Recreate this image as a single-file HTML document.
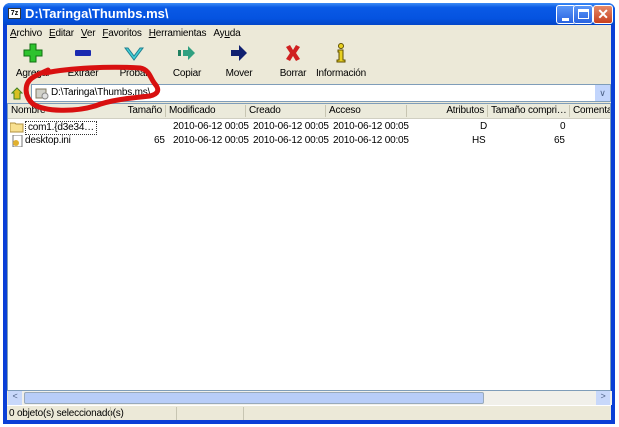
<!DOCTYPE html>
<html><head><meta charset="utf-8"><style>
*{margin:0;padding:0;box-sizing:border-box}
body{width:619px;height:427px;background:#fff;position:relative;overflow:hidden;font-family:"Liberation Sans",sans-serif;font-size:10px;letter-spacing:-0.2px;color:#000}
.win{position:absolute;left:3px;top:3px;width:612px;height:421px;background:#0a3fd6;border-radius:7px 7px 0 0}
.title{position:absolute;left:0;top:0;width:612px;height:22px;border-radius:7px 7px 0 0;background:linear-gradient(#3d8cf5,#0a5ae6 20%,#0553e0 70%,#0346c8);color:#fff;font-weight:bold;font-size:13px;letter-spacing:0;line-height:22px;padding-left:22px}
.ic7{position:absolute;left:5px;top:5px;width:13px;height:11px;background:#fff;border:1px solid #333;font-size:7px;line-height:9px;color:#000;text-align:center}
.btn{position:absolute;top:2px;width:20px;height:19px;border:1px solid #fff;border-radius:3px;background:linear-gradient(#5a96f7,#2a63e0)}
.btn.x{background:linear-gradient(#e48a6a,#c8401e)}
.inner{position:absolute;left:4px;top:22px;width:604px;height:395px;background:#ece9d8}
.menu{position:absolute;top:2px;left:3px;height:14px;line-height:14px}
.menu span{margin-right:7px}
.tb{position:absolute;top:17px;left:0;width:604px;height:42px}
.tbi{position:absolute;top:0;width:56px;text-align:center}
.tbi .lb{position:absolute;top:26px;left:0;width:56px;text-align:center}
.addr{position:absolute;left:24px;top:59px;width:580px;height:18px;background:#fff;border:1px solid #7f9db9}
.dd{position:absolute;right:0;top:0;width:15px;height:16px;background:#c2d5fc;color:#4d6185;font-size:9px;text-align:center;line-height:16px}
.list{position:absolute;left:0;top:78px;width:604px;height:288px;background:#fff;border:1px solid #7f9db9}
.hdr{position:absolute;left:0;top:0;width:602px;height:15px;background:#ebeadb;border-bottom:1px solid #d0cfc2}
.hdr span{position:absolute;top:1px;border-right:1px solid #c7c5b2;height:12px;line-height:12px;padding:0 3px;white-space:nowrap;overflow:hidden}
.row{position:absolute;left:0;height:14px;line-height:14px;width:602px}
.row span{position:absolute;white-space:nowrap}
.sb{position:absolute;left:0;top:287px;width:604px;height:14px;background:#f1f0ea}
.status{position:absolute;left:0;top:380px;width:604px;height:15px;background:#ece9d8;border-top:1px solid #fff;line-height:15px}
</style></head><body>
<div class="win">
 <div class="title"><div class="ic7">7z</div>D:\Taringa\Thumbs.ms\</div>
 <div class="btn" style="left:553px"><div style="position:absolute;left:5px;top:12px;width:7px;height:3px;background:#fff"></div></div>
 <div class="btn" style="left:570px"><div style="position:absolute;left:4px;top:3px;width:11px;height:10px;border:1px solid #fff;border-top-width:3px"></div></div>
 <div class="btn x" style="left:590px;color:#fff;font-weight:bold;font-size:14px;text-align:center;line-height:17px">✕</div>
 <div class="inner">
  <div class="menu"><span><u>A</u>rchivo</span><span><u>E</u>ditar</span><span><u>V</u>er</span><span><u>F</u>avoritos</span><span><u>H</u>erramientas</span><span>Ay<u>u</u>da</span></div>
  <div class="tb">
   <div class="tbi" style="left:-2px"><svg width="20" height="22" viewBox="0 0 20 22"><path d="M7 2h6v6h6v6h-6v6H7v-6H1V8h6z" fill="#2ec32e" stroke="#107010"/></svg><div class="lb">Agregar</div></div>
   <div class="tbi" style="left:48px"><svg width="20" height="22" viewBox="0 0 20 22"><rect x="2" y="8" width="16" height="6" rx="1" fill="#1a2ab0"/></svg><div class="lb">Extraer</div></div>
   <div class="tbi" style="left:99px"><svg width="20" height="22" viewBox="0 0 20 22"><path d="M1 6l9 12 9-12-3 0-6 8-6-8z" fill="#40d0d8" stroke="#208090"/></svg><div class="lb">Probar</div></div>
   <div class="tbi" style="left:152px"><svg width="20" height="22" viewBox="0 0 20 22"><rect x="1" y="8" width="3" height="6" fill="#208060"/><path d="M6 8h5V4l7 7-7 7v-4H6z" fill="#30a080"/></svg><div class="lb">Copiar</div></div>
   <div class="tbi" style="left:204px"><svg width="20" height="22" viewBox="0 0 20 22"><path d="M2 8h8V3l8 8-8 8v-5H2z" fill="#102070"/></svg><div class="lb">Mover</div></div>
   <div class="tbi" style="left:258px"><svg width="20" height="22" viewBox="0 0 20 22"><path d="M3 5l4-2 3 5 3-5 4 2-4 6 4 6-4 2-3-5-3 5-4-2 4-6z" fill="#d02020"/></svg><div class="lb">Borrar</div></div>
   <div class="tbi" style="left:306px;width:56px"><svg width="20" height="22" viewBox="0 0 20 22"><circle cx="10" cy="4" r="2.5" fill="#e8d020" stroke="#605000"/><path d="M7 8h5v10h2v2H6v-2h2v-8H7z" fill="#e8d020" stroke="#605000"/></svg><div class="lb">Información</div></div>
  </div>
  <svg style="position:absolute;left:4px;top:61px" width="14" height="14"><path d="M3 13V7H1l5-5 5 5H9v6z" fill="#d8c020" stroke="#408020"/></svg>
  <div class="addr"><svg style="position:absolute;left:3px;top:1px" width="14" height="14"><rect x="1" y="3" width="10" height="9" fill="#d0d0c8" stroke="#807860"/><circle cx="10" cy="10" r="3" fill="#e0e0e0" stroke="#888"/></svg><span style="position:absolute;left:19px;top:2px">D:\Taringa\Thumbs.ms\</span><div class="dd">∨</div></div>
  <div class="list">
   <div class="hdr">
    <span style="left:0;width:158px">Nombre<b style="float:right;font-weight:normal">Tamaño</b></span>
    <span style="left:158px;width:80px">Modificado</span>
    <span style="left:238px;width:80px">Creado</span>
    <span style="left:318px;width:81px">Acceso</span>
    <span style="left:399px;width:81px;text-align:right">Atributos</span>
    <span style="left:480px;width:82px">Tamaño compri…</span>
    <span style="left:562px;width:40px;border:none">Comentar</span>
   </div>
   <div class="row" style="top:16px"><svg style="position:absolute;left:2px;top:1px" width="14" height="12"><path d="M0 2h5l1 1h7v8H0z" fill="#f8e090" stroke="#b09040"/></svg><span style="left:17px;border:1px dotted #333;padding:0 2px;line-height:12px;top:1px">com1.{d3e34…</span><span style="left:165px">2010-06-12 00:05</span><span style="left:245px">2010-06-12 00:05</span><span style="left:325px">2010-06-12 00:05</span><span style="left:472px">D</span><span style="left:552px">0</span></div>
   <div class="row" style="top:30px"><svg style="position:absolute;left:4px;top:1px" width="12" height="12"><rect x="1" y="0" width="9" height="12" fill="#fff" stroke="#777"/><circle cx="4" cy="8" r="3" fill="#e0b030"/></svg><span style="left:17px">desktop.ini</span><span style="left:146px">65</span><span style="left:165px">2010-06-12 00:05</span><span style="left:245px">2010-06-12 00:05</span><span style="left:325px">2010-06-12 00:05</span><span style="left:464px">HS</span><span style="left:546px">65</span></div>
   <div class="sb"><div style="position:absolute;left:0;top:0;width:14px;height:14px;background:#c8d8fa;color:#4d6185;font-size:9px;text-align:center">&lt;</div><div style="position:absolute;left:16px;top:1px;width:460px;height:12px;background:#b8cdf8;border-radius:2px;border:1px solid #9ab"></div><div style="position:absolute;right:2px;top:0;width:14px;height:14px;background:#c8d8fa;color:#4d6185;font-size:9px;text-align:center">&gt;</div></div>
  </div>
  <div class="status"><span style="padding-left:2px">0 objeto(s) seleccionado(s)</span>
   <div style="position:absolute;left:103px;top:1px;height:13px;border-left:1px solid #c7c5b2"></div>
   <div style="position:absolute;left:169px;top:1px;height:13px;border-left:1px solid #c7c5b2"></div>
   <div style="position:absolute;left:236px;top:1px;height:13px;border-left:1px solid #c7c5b2"></div>
  </div>
 </div>
</div>
<svg style="position:absolute;left:0;top:0" width="619" height="427"><path d="M45 73 C70 68 110 66 140 68 C150 70 150 78 155 84 C160 90 158 94 150 96 C130 98 110 100 95 106 C75 112 45 112 33 104 C24 96 24 84 32 78 C38 74 44 72 48 70" fill="none" stroke="#d81010" stroke-width="5" stroke-linecap="round"/></svg>
</body></html>
